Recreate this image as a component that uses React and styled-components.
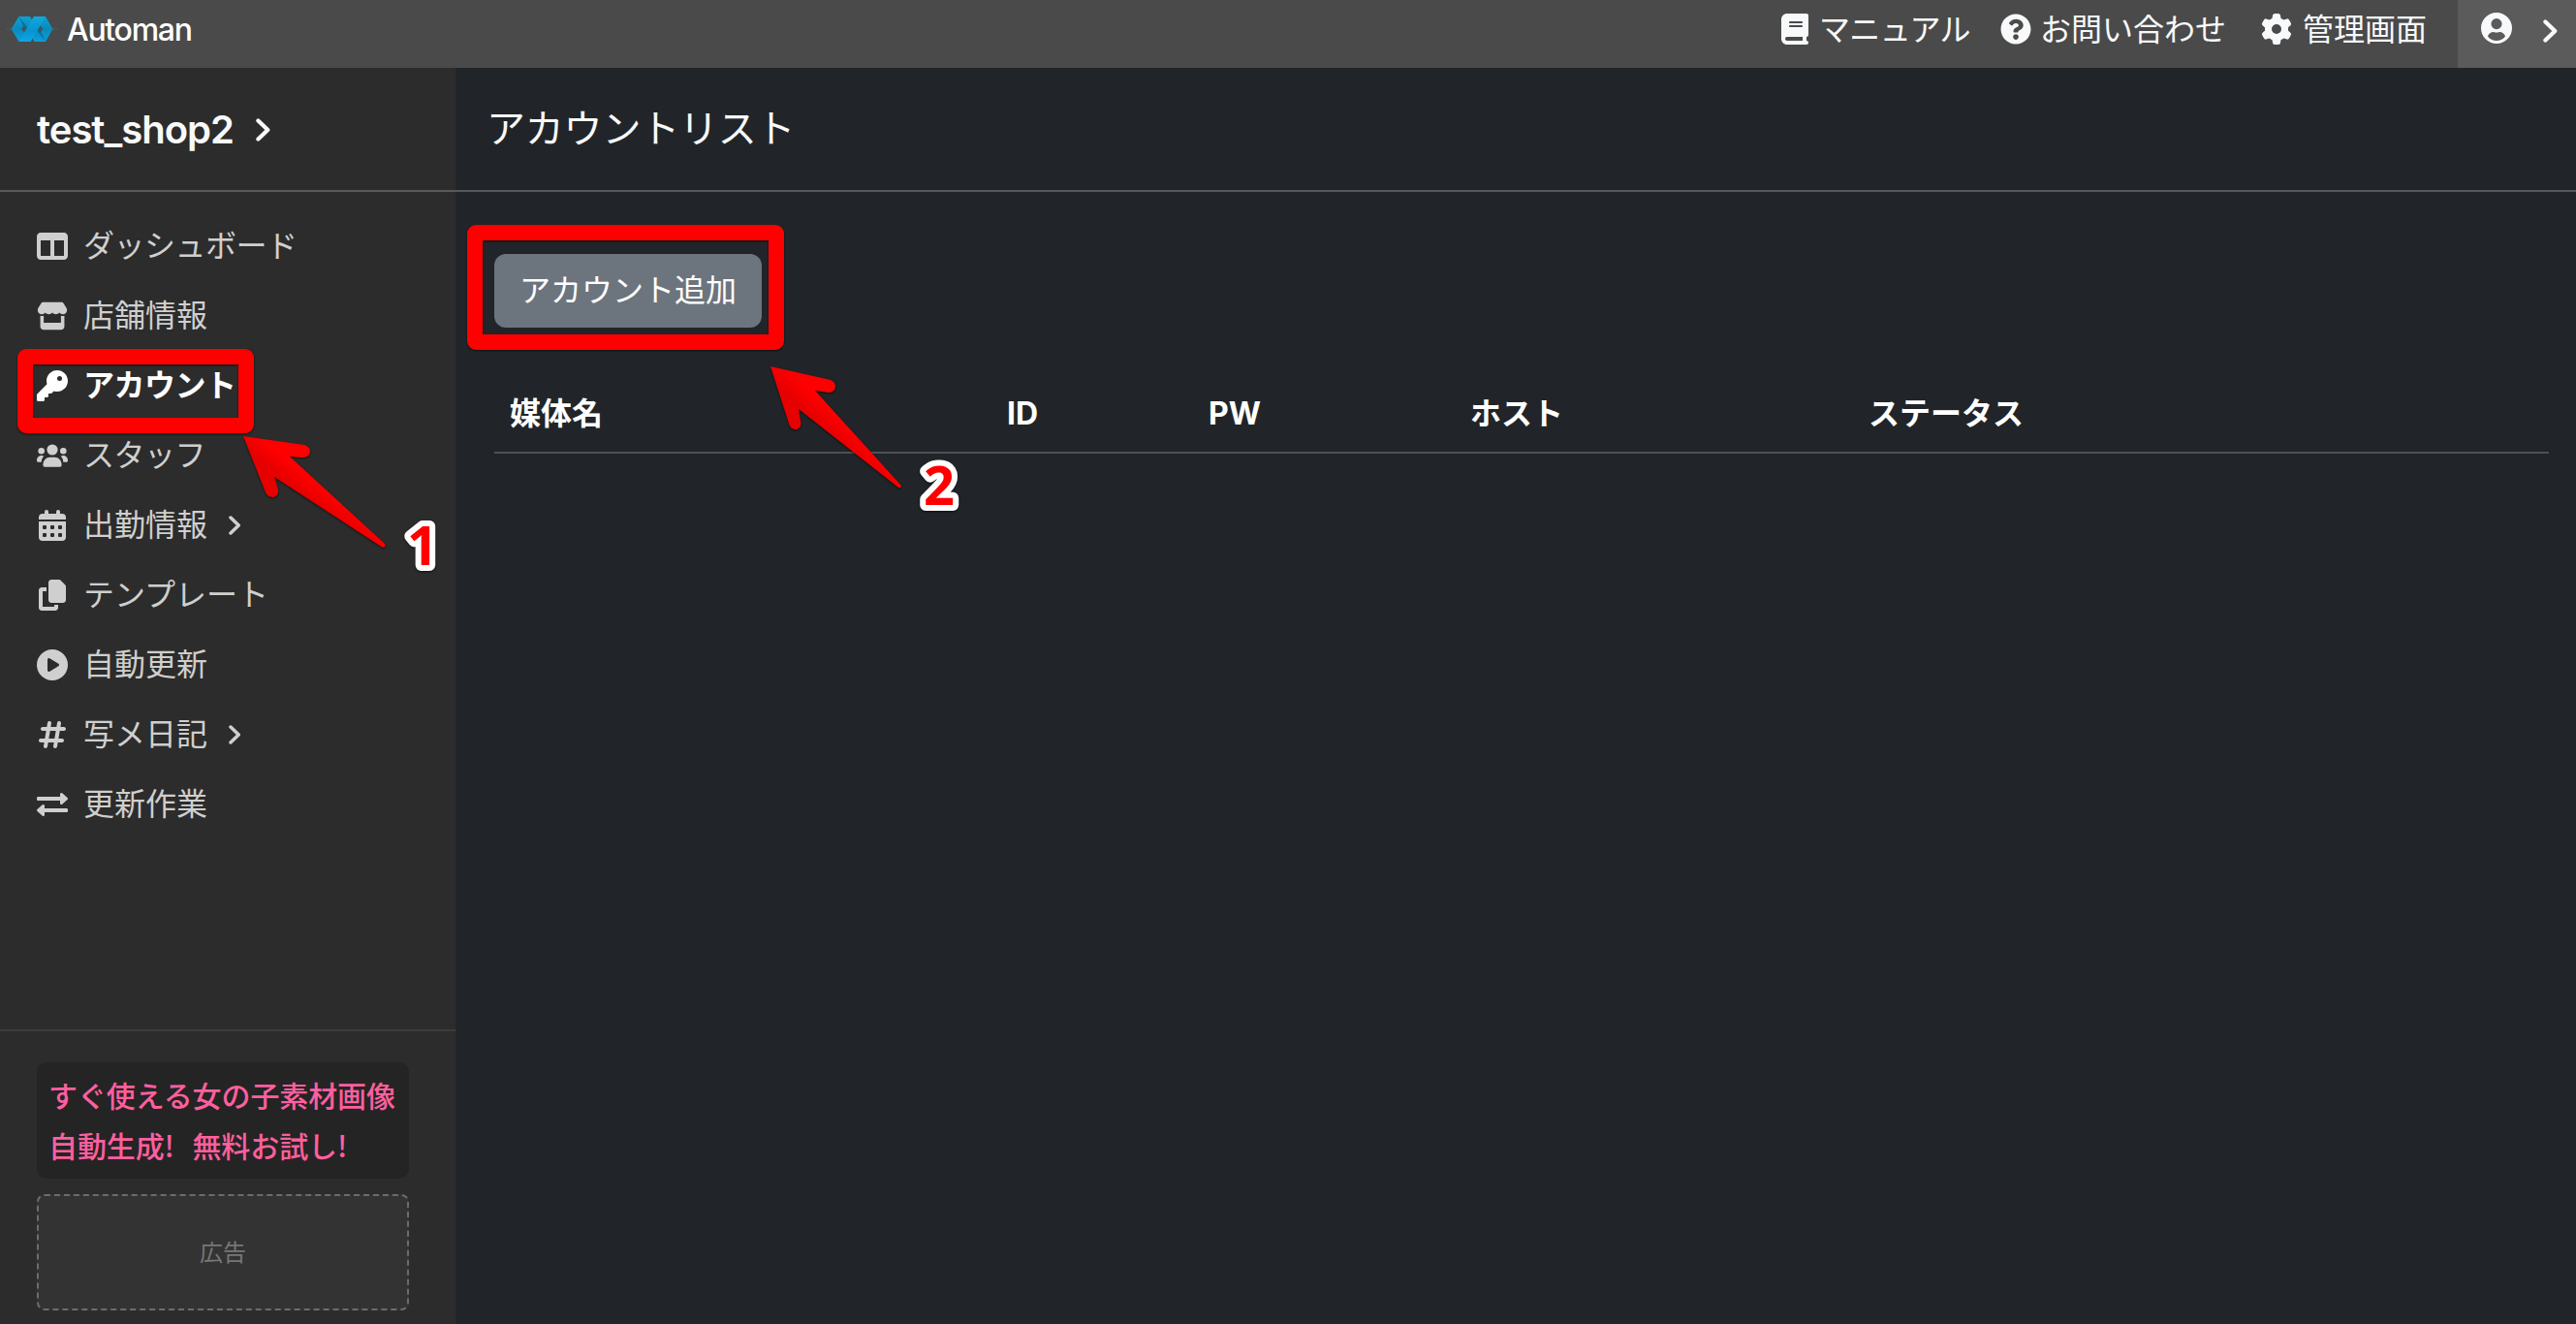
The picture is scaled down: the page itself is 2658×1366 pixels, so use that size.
import styled, { createGlobalStyle } from "styled-components"
import {
    FaTableColumns, FaStore, FaKey, FaCopy, FaCirclePlay, FaHashtag, FaBook, FaGear
} from "react-icons/fa6";
import { FaQuestionCircle } from "react-icons/fa";

const UsersIcon = () => (
    <svg viewBox="0 0 32 32" fill="currentColor">
        <circle cx="16" cy="10" r="5.6" />
        <circle cx="4.7" cy="11.3" r="3.3" />
        <circle cx="27.3" cy="11.3" r="3.3" />
        <path d="M6.400 25.800C6.400 21 9.600 17.700 13.600 17.700h4.800c4 0 7.200 3.300 7.200 8.100 0 1.200-.8 1.900-1.900 1.900H8.300c-1.100 0-1.900-.7-1.900-1.900z" />
        <path d="M0 21.200c0-3 2-5.100 4.700-5.100 1 0 1.900.3 2.600.7C5.700 18.200 4.900 20.300 4.700 22.700H1.500C.6 22.700 0 22.100 0 21.200z" />
        <path d="M32 21.200c0-3-2-5.100-4.700-5.100-1 0-1.900.3-2.600.7 1.600 1.400 2.400 3.500 2.600 5.900h3.200c.9 0 1.500-.6 1.500-1.500z" />
    </svg>
)

const CalendarIcon = () => (
    <svg viewBox="0 0 32 32" fill="currentColor">
        <rect x="8" y="0" width="4" height="8" rx="2" />
        <rect x="20" y="0" width="4" height="8" rx="2" />
        <path d="M2 10V8a4 4 0 0 1 4-4h20a4 4 0 0 1 4 4v2z" />
        <path
            fillRule="evenodd"
            d="M2 12h28v16a4 4 0 0 1-4 4H6a4 4 0 0 1-4-4zM7 16a1 1 0 0 0-1 1v2a1 1 0 0 0 1 1h2a1 1 0 0 0 1-1v-2a1 1 0 0 0-1-1zM15 16a1 1 0 0 0-1 1v2a1 1 0 0 0 1 1h2a1 1 0 0 0 1-1v-2a1 1 0 0 0-1-1zM23 16a1 1 0 0 0-1 1v2a1 1 0 0 0 1 1h2a1 1 0 0 0 1-1v-2a1 1 0 0 0-1-1zM7 24a1 1 0 0 0-1 1v2a1 1 0 0 0 1 1h2a1 1 0 0 0 1-1v-2a1 1 0 0 0-1-1zM15 24a1 1 0 0 0-1 1v2a1 1 0 0 0 1 1h2a1 1 0 0 0 1-1v-2a1 1 0 0 0-1-1zM23 24a1 1 0 0 0-1 1v2a1 1 0 0 0 1 1h2a1 1 0 0 0 1-1v-2a1 1 0 0 0-1-1z"
        />
    </svg>
)

const ExchangeIcon = () => (
    <svg viewBox="0 0 32 32" fill="currentColor">
        <path d="M1.500 8H24V5.500C24 4 25.500 3.500 26.500 4.500l5 4.500c.7.700.7 1.300 0 2l-5 4.500C25.500 16.500 24 16 24 14.500V12H1.500C.5 12 0 11.500 0 10.500v-1C0 8.500.5 8 1.500 8z" />
        <path d="M30.500 20H8v-2.500C8 16 6.500 15.500 5.500 16.500l-5 4.500c-.7.700-.7 1.300 0 2l5 4.500C6.500 28.500 8 28 8 26.500V24h22.500c1 0 1.500-.5 1.500-1.500v-1c0-1-.5-1.500-1.500-1.500z" />
    </svg>
)

const UserIcon = () => (
    <svg width="32" height="32" viewBox="0 0 32 32" fill="currentColor">
        <path
            fillRule="evenodd"
            d="M16 0a16 16 0 1 1 0 32a16 16 0 1 1 0-32zM16 6a5.600 5.600 0 1 0 0 11.200a5.600 5.600 0 1 0 0-11.200zM7 24.500C9 27.300 12.300 29 16 29s7-1.700 9-4.500C24.500 21.800 21.500 20 19 20q-3 1-6 0C10.500 20 7.500 21.800 7 24.500z"
        />
    </svg>
)

const Chevron = ({ size }) => (
    <ChevronSvg $size={size} viewBox="0 0 10 16">
        <path d="M1.600 1.600L8.200 8l-6.600 6.400" />
    </ChevronSvg>
)

const Logo = () => (
    <LogoSvg viewBox="0 0 54 28">
        <defs>
            <linearGradient id="band" x1="0" y1="0" x2="0" y2="1">
                <stop offset="0" stopColor="#10aade" />
                <stop offset="0.55" stopColor="#0795d0" />
                <stop offset="1" stopColor="#0ca6e4" />
            </linearGradient>
            <linearGradient id="fold" x1="0" y1="0" x2="0" y2="1">
                <stop offset="0" stopColor="#0ba0d6" />
                <stop offset="0.5" stopColor="#0b8abb" />
                <stop offset="1" stopColor="#0b9fdc" />
            </linearGradient>
        </defs>
        <path d="M0 14h54" stroke="#2d6f88" strokeWidth="0.6" />
        <path d="M13.500 1H25l2 3.500L29 1h12l7.500 13L41 27H29.500l-2-3.500-2 3.500h-12L5.500 14z" fill="url(#fold)" />
        <path d="M13.500 1l10 13h-4z" fill="#0b7196" />
        <path d="M41 27L31 14h4z" fill="#0b7196" />
        <path d="M16 14l3-3.500 2 3.500-2 3.500zM38.500 14l-3-3.500-2 3.500 2 3.500z" fill="#3d5560" />
        <path d="M29 1h12L25.500 27h-12z" fill="url(#band)" />
    </LogoSvg>
)

const menu = [
    { label: "ダッシュボード", icon: FaTableColumns, tight: true },
    { label: "店舗情報", icon: FaStore },
    { label: "アカウント", icon: FaKey, active: true, tight: true },
    { label: "スタッフ", icon: UsersIcon, tight: true },
    { label: "出勤情報", icon: CalendarIcon, more: true },
    { label: "テンプレート", icon: FaCopy },
    { label: "自動更新", icon: FaCirclePlay },
    { label: "写メ日記", icon: FaHashtag, more: true },
    { label: "更新作業", icon: ExchangeIcon },
]

const columns = ["媒体名", "ID", "PW", "ホスト", "ステータス"]

const TopBar = () => (
    <Bar>
        <Brand>
            <Logo />
            <span>Automan</span>
        </Brand>
        <BarLinks>
            <BarLink $tight><FaBook /><span>マニュアル</span></BarLink>
            <BarLink><FaQuestionCircle /><span>お問い合わせ</span></BarLink>
            <BarLink $wide><FaGear /><span>管理画面</span></BarLink>
        </BarLinks>
        <UserMenu>
            <UserIcon />
            <Chevron size={24} />
        </UserMenu>
    </Bar>
)

const Sidebar = () => (
    <Side>
        <Shop>
            <span>test_shop2</span>
            <Chevron size={24} />
        </Shop>
        <Menu>
            {menu.map(({ label, icon: Icon, active, more, tight }) => (
                <MenuItem key={label} $active={active} $tight={tight}>
                    <Icon />
                    <span>{label}</span>
                    {more && <Chevron size={20} />}
                </MenuItem>
            ))}
        </Menu>
        <Promo>
            <PromoText>すぐ使える女の子素材画像<br />自動生成! 無料お試し!</PromoText>
            <Ad>広告</Ad>
        </Promo>
    </Side>
)

const Annotations = () => (
    <Overlay viewBox="0 0 2658 1366">
        <defs>
            <linearGradient id="arrow" x1="0" y1="1" x2="1" y2="0">
                <stop offset="0.45" stopColor="#e60000" />
                <stop offset="0.55" stopColor="#ff0000" />
            </linearGradient>
        </defs>
        <rect x="26" y="368" width="228" height="71" rx="1" />
        <rect x="490" y="240" width="311" height="113" rx="1" />
        <path d="M251 450L314 459Q320 461 320 466Q319 472 312 472L299 471L397 561Q399 564 395 565L283 492L287 505Q288 511 282 513Q276 513 274 508Z" />
        <path d="M795 378L857 392Q862 394 862 399Q861 405 855 405L841 403L930 501Q930 504 927 503L824 422L826.500 437Q826 443 820 443Q815 442 814 437Z" />
        <text x="420" y="583">1</text>
        <text x="953" y="521">2</text>
    </Overlay>
)

const App = () => {
    return <>
        <GlobalStyle />
        <Page>
            <TopBar />
            <Body>
                <Sidebar />
                <Main>
                    <Title>アカウントリスト</Title>
                    <Content>
                        <AddButton>アカウント追加</AddButton>
                        <TableHead>
                            {columns.map((name) => <HeadCell key={name}>{name}</HeadCell>)}
                        </TableHead>
                    </Content>
                </Main>
            </Body>
            <Annotations />
        </Page>
    </>
}

const GlobalStyle = createGlobalStyle`
    * {
        box-sizing: border-box;
    }
    body {
        margin: 0;
        background: #212529;
        font-family: Inter, "Noto Sans CJK JP", sans-serif;
        font-size: 32px;
        line-height: 48px;
        color: #f8f9fa;
    }
`

const Page = styled.div`
    position: relative;
    display: flex;
    flex-direction: column;
    height: 1366px;
    overflow: hidden;
`

const Bar = styled.header`
    display: flex;
    height: 70px;
    background: #4a4a4a;
`

const Brand = styled.div`
    display: flex;
    align-items: center;
    gap: 9px;
    height: 60px;
    padding-left: 6px;
    font-weight: 500;
    letter-spacing: -1.3px;
    color: white;

    span {
        padding-top: 2px;
    }
`

const LogoSvg = styled.svg`
    width: 54px;
    height: 28px;
`

const BarLinks = styled.nav`
    display: flex;
    gap: 28px;
    height: 60px;
    margin-left: auto;
    margin-right: 32px;
`

const BarLink = styled.a`
    display: flex;
    align-items: center;
    gap: ${({ $wide }) => $wide ? 11 : 9}px;
    margin-left: ${({ $wide }) => $wide ? 8 : 0}px;
    margin-right: ${({ $tight }) => $tight ? 3 : 0}px;
    letter-spacing: ${({ $tight }) => $tight ? "-0.6px" : "normal"};

    span {
        padding-top: 1px;
    }
`

const UserMenu = styled.div`
    display: flex;
    justify-content: space-between;
    align-items: flex-start;
    width: 122px;
    padding: 13px 19px 0 24px;
    background: #5b5b5b;

    svg:last-child {
        margin-top: 7px;
    }
`

const ChevronSvg = styled.svg`
    width: ${({ $size }) => $size * 0.625}px;
    height: ${({ $size }) => $size}px;
    fill: none;
    stroke: currentColor;
    stroke-width: 2.8px;
    stroke-linecap: round;
    stroke-linejoin: round;
`

const Body = styled.div`
    display: flex;
    flex: 1;
`

const Side = styled.aside`
    display: flex;
    flex-direction: column;
    width: 470px;
    background: #2c2c2c;
`

const Shop = styled.div`
    display: flex;
    align-items: center;
    gap: 23px;
    height: 128px;
    padding: 2px 0 0 38px;
    border-bottom: 2px solid #5a5a5a;
    font-size: 40px;
    font-weight: 600;
    letter-spacing: -1px;
`

const Menu = styled.ul`
    display: flex;
    flex-direction: column;
    margin: 0;
    padding: 20px 38px;
    list-style: none;
`

const MenuItem = styled.li`
    display: flex;
    align-items: center;
    height: 72px;
    color: ${({ $active }) => $active ? "#fff" : "#cfcfcf"};
    font-weight: ${({ $active }) => $active ? 700 : 400};
    letter-spacing: ${({ $tight }) => $tight ? "-0.5px" : "normal"};

    > svg:first-child {
        width: 32px;
        height: 32px;
    }

    span {
        margin: 0 22px 0 16px;
    }
`

const Promo = styled.div`
    margin-top: auto;
    height: 304px;
    padding: 32px 48px 0 38px;
    border-top: 2px solid #3c3c3c;
`

const PromoText = styled.div`
    height: 120px;
    padding: 7px 12px;
    border-radius: 10px;
    background: #242424;
    color: #ff5f9e;
    font-family: "Noto Sans CJK JP", sans-serif;
    font-size: 30px;
    font-weight: 500;
    line-height: 52px;
    letter-spacing: -0.1px;
    white-space: nowrap;
    word-spacing: 12px;
`

const Ad = styled.div`
    display: flex;
    align-items: center;
    justify-content: center;
    height: 120px;
    margin-top: 16px;
    padding-top: 2px;
    border: 2px dashed #6c6c6c;
    border-radius: 8px;
    background: #333;
    color: #777;
    font-size: 24px;
`

const Main = styled.main`
    flex: 1;
`

const Title = styled.h1`
    height: 128px;
    margin: 0;
    padding-left: 32px;
    border-bottom: 2px solid #55585b;
    font-size: 40px;
    font-weight: 400;
    line-height: 126px;
    letter-spacing: -0.2px;
`

const Content = styled.div`
    padding: 64px 28px 0 40px;
`

const AddButton = styled.button`
    display: block;
    width: 276px;
    height: 76px;
    padding: 0;
    border: none;
    border-radius: 12px;
    background: #6c757d;
    color: white;
    font: inherit;
`

const TableHead = styled.div`
    display: grid;
    grid-template-columns: 513px 208px 270px 411px 1fr;
    margin-top: 48px;
    border-bottom: 2px solid #4d5154;
`

const HeadCell = styled.div`
    padding: 17px 16px 15px;
    color: white;
    font-weight: 700;
`

const Overlay = styled.svg`
    position: absolute;
    top: 0;
    left: 0;
    width: 2658px;
    height: 1366px;
    pointer-events: none;
    filter: drop-shadow(0 1px 1px rgba(0, 0, 0, 0.6));

    rect {
        fill: none;
        stroke: #ff0000;
        stroke-width: 16px;
        stroke-linejoin: round;
    }

    path {
        fill: url(#arrow);
    }

    text {
        font-family: "Open Sans", sans-serif;
        font-size: 56px;
        font-weight: 700;
        fill: #ff0000;
        stroke: white;
        stroke-width: 12px;
        stroke-linejoin: round;
        paint-order: stroke;
    }
`

export default App;
